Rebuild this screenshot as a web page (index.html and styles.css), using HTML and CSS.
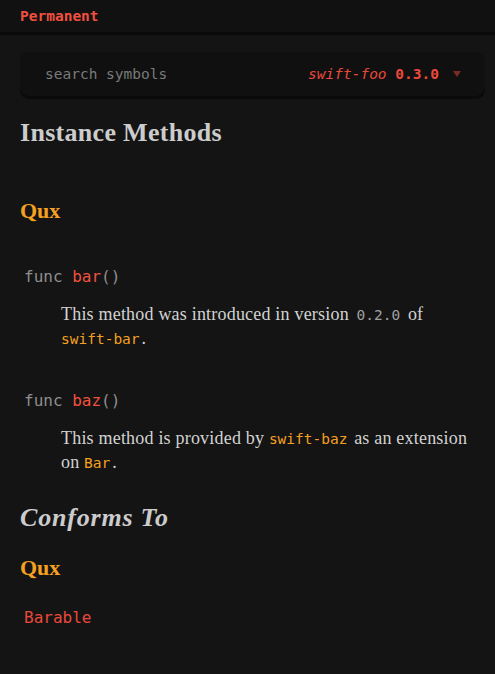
FILE: index.html
```html
<!DOCTYPE html>
<html>
<head>
<meta charset="utf-8">
<link rel="stylesheet" href="styles.css">
</head>
<body>
<header class="topbar"><span class="perm">Permanent</span></header>
<main class="content">
  <div class="search">
    <span class="placeholder">search symbols</span>
    <span class="pkg"><em>swift-foo</em> <b>0.3.0</b></span>
    <span class="caret"></span>
  </div>
  <h2 class="section">Instance Methods</h2>
  <h3 class="group first">Qux</h3>
  <div class="member">
    <code class="sig">func <span class="name">bar</span>()</code>
    <p class="desc">This method was introduced in version <code class="ver">0.2.0</code> of <code class="ref">swift-bar</code>.</p>
  </div>
  <div class="member">
    <code class="sig">func <span class="name">baz</span>()</code>
    <p class="desc">This method is provided by <code class="ref">swift-baz</code> as an extension on <code class="ref">Bar</code>.</p>
  </div>
  <h2 class="section italic">Conforms To</h2>
  <h3 class="group">Qux</h3>
  <code class="conf">Barable</code>
</main>
</body>
</html>
```
FILE: styles.css
```css
html, body { margin: 0; padding: 0; background: #141414; }
body { font-family: "Liberation Serif", serif; color: #cfcfcf; }
code { font-family: "DejaVu Sans Mono", "Liberation Mono", monospace; white-space: nowrap; }

.topbar {
  height: 32px;
  background: #111111;
  border-bottom: 3px solid #0a0a0a;
  display: flex;
  align-items: center;
  padding-left: 20px;
}
.perm {
  font-family: "DejaVu Sans Mono", monospace;
  font-weight: bold;
  font-size: 14.5px;
  color: #f0503e;
}
.content { padding: 17px 10px 40px 20px; }

.search {
  height: 44px;
  background: #101010;
  border-radius: 9px;
  box-shadow: 0 3px 0 #0a0a0a;
  display: flex;
  align-items: center;
  padding: 0 24px 0 25px;
  font-family: "DejaVu Sans Mono", monospace;
  font-size: 14.5px;
}
.placeholder { color: #7a7a7a; flex: 1; }
.pkg { color: #e8493a; }
.pkg em { font-style: italic; }
.pkg b { font-weight: bold; }
.caret {
  width: 0; height: 0;
  border-left: 4px solid transparent;
  border-right: 4px solid transparent;
  border-top: 6px solid #7a2c24;
  margin-left: 14px;
}

.section {
  font-size: 26px;
  font-weight: bold;
  color: #cccccc;
  margin: 22px 0 0;
  line-height: 30px;
  letter-spacing: 0.3px;
}
.section.italic { font-style: italic; margin-top: 29px; letter-spacing: 0.8px; }
.group {
  font-size: 22px;
  font-weight: bold;
  color: #f5a020;
  margin: 22px 0 0;
  line-height: 26px;
}
.group.first { margin-top: 50px; }

.member { margin-top: 43px; }
.member + .member { margin-top: 41px; }
.sig {
  display: block;
  font-size: 16px;
  color: #8e8e8e;
  padding-left: 4px;
  line-height: 20px;
}
.name { color: #f0503e; }
.desc {
  margin: 15px 0 0 41px;
  font-size: 18px;
  letter-spacing: 0.2px;
  line-height: 24px;
  color: #d2d2d2;
}
.ver { font-size: 14.5px; line-height: 1; letter-spacing: 0; color: #a0a0a0; margin: 0 3px; }
.ref { font-size: 14.5px; line-height: 1; letter-spacing: 0; color: #f5a020; margin: 0 2px 0 0; }
.conf {
  display: block;
  margin-top: 27px;
  padding-left: 4px;
  font-size: 16px;
  color: #e8493a;
}
```
